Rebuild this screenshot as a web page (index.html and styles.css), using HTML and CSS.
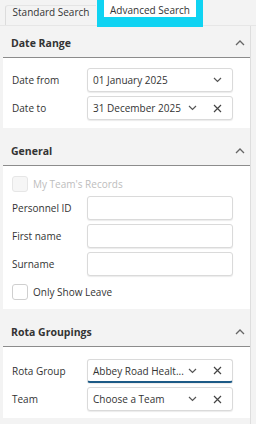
FILE: index.html
```html
<!DOCTYPE html>
<html lang="en">
<head>
    <meta charset="UTF-8">
    <meta name="viewport" content="width=device-width, initial-scale=1.0">
    <title>Search</title>
    <link rel="stylesheet" href="styles.css">
</head>
<body>
    <div class="tabs">
        <div class="tab">Standard Search</div>
        <div class="tab-active"><span>Advanced Search</span></div>
    </div>

    <div class="panel">
        <div class="section">
            <div class="section-head">
                <h4>Date Range</h4>
                <svg class="chev-up" width="10" height="6" viewBox="0 0 10 6"><path d="M1 5 L5 1 L9 5" fill="none" stroke="#666" stroke-width="1.3"/></svg>
            </div>
            <div class="section-body">
                <div class="row">
                    <label>Date from</label>
                    <div class="field">
                        <span class="value">01 January 2025</span>
                        <span class="icons">
                            <svg width="9" height="6" viewBox="0 0 9 6"><path d="M1 1 L4.5 4.5 L8 1" fill="none" stroke="#555" stroke-width="1.2"/></svg>
                        </span>
                    </div>
                </div>
                <div class="row">
                    <label>Date to</label>
                    <div class="field">
                        <span class="value">31 December 2025</span>
                        <span class="icons">
                            <svg width="9" height="6" viewBox="0 0 9 6"><path d="M1 1 L4.5 4.5 L8 1" fill="none" stroke="#555" stroke-width="1.2"/></svg>
                            <svg width="9" height="9" viewBox="0 0 9 9"><path d="M1 1 L8 8 M8 1 L1 8" fill="none" stroke="#444" stroke-width="1.2"/></svg>
                        </span>
                    </div>
                </div>
            </div>
        </div>

        <div class="section">
            <div class="section-head">
                <h4>General</h4>
                <svg class="chev-up" width="10" height="6" viewBox="0 0 10 6"><path d="M1 5 L5 1 L9 5" fill="none" stroke="#666" stroke-width="1.3"/></svg>
            </div>
            <div class="section-body general">
                <div class="check disabled">
                    <span class="box"></span>
                    <span>My Team's Records</span>
                </div>
                <div class="row">
                    <label>Personnel ID</label>
                    <div class="field"></div>
                </div>
                <div class="row">
                    <label>First name</label>
                    <div class="field"></div>
                </div>
                <div class="row">
                    <label>Surname</label>
                    <div class="field"></div>
                </div>
                <div class="check">
                    <span class="box"></span>
                    <span>Only Show Leave</span>
                </div>
            </div>
        </div>

        <div class="section">
            <div class="section-head">
                <h4>Rota Groupings</h4>
                <svg class="chev-up" width="10" height="6" viewBox="0 0 10 6"><path d="M1 5 L5 1 L9 5" fill="none" stroke="#666" stroke-width="1.3"/></svg>
            </div>
            <div class="section-body rota">
                <div class="row">
                    <label>Rota Group</label>
                    <div class="field focused">
                        <span class="value">Abbey Road Healt...</span>
                        <span class="icons">
                            <svg width="9" height="6" viewBox="0 0 9 6"><path d="M1 1 L4.5 4.5 L8 1" fill="none" stroke="#555" stroke-width="1.2"/></svg>
                            <svg width="9" height="9" viewBox="0 0 9 9"><path d="M1 1 L8 8 M8 1 L1 8" fill="none" stroke="#444" stroke-width="1.2"/></svg>
                        </span>
                    </div>
                </div>
                <div class="row">
                    <label>Team</label>
                    <div class="field">
                        <span class="value">Choose a Team</span>
                        <span class="icons">
                            <svg width="9" height="6" viewBox="0 0 9 6"><path d="M1 1 L4.5 4.5 L8 1" fill="none" stroke="#555" stroke-width="1.2"/></svg>
                            <svg width="9" height="9" viewBox="0 0 9 9"><path d="M1 1 L8 8 M8 1 L1 8" fill="none" stroke="#444" stroke-width="1.2"/></svg>
                        </span>
                    </div>
                </div>
            </div>
        </div>
    </div>
</body>
</html>
```

FILE: styles.css
```css
* {
    box-sizing: border-box;
    margin: 0;
    padding: 0;
}
body {
    background-color: #f3f3f3;
    font-family: 'Open Sans', sans-serif;
    font-size: 10px;
    color: #333;
    width: 256px;
    height: 424px;
    overflow: hidden;
}

/* tabs */
.tabs {
    display: flex;
    align-items: flex-start;
    height: 26px;
    padding-left: 5px;
    border-bottom: 1px solid #e6e6e6;
}
.tab {
    margin-top: 5px;
    height: 20px;
    width: 91px;
    line-height: 13px;
    text-align: center;
    border-left: 1px solid #dcdcdc;
    border-top: 1px solid #e4e4e4;
    border-radius: 3px 0 0 0;
    color: #333;
}
.tab-active {
    margin-left: 1px;
    width: 106px;
    height: 27px;
    background-color: #0fd3f2;
    padding: 0 7px 10px 7px;
}
.tab-active span {
    display: block;
    height: 17px;
    background-color: #fff;
    text-align: center;
    line-height: 20px;
}

/* panel */
.panel {
    margin-left: 3px;
    width: 248px;
    border-right: 1px solid #dedede;
    padding-top: 3px;
    height: 398px;
}
.section + .section {
    margin-top: 9px;
}
.section-head {
    display: flex;
    align-items: center;
    justify-content: space-between;
    height: 29px;
    padding: 0 5px 0 8px;
    border-bottom: 1px solid #8c8c8c;
}
.section-head h4 {
    font-size: 10.5px;
    font-weight: bold;
    color: #333;
}
.section-body {
    background-color: #fff;
    padding: 10px 17px 8px 9px;
    display: flex;
    flex-direction: column;
    gap: 4px;
}
.section-body.general {
    padding-bottom: 9px;
}
.section-body.rota {
    padding-top: 12px;
    padding-bottom: 7px;
}

.row {
    display: flex;
    align-items: center;
}
.row label {
    width: 75px;
    flex: none;
}
.field {
    flex: 1;
    height: 24px;
    border: 1px solid #dadada;
    border-radius: 3px;
    box-shadow: 0 1px 1px rgba(0, 0, 0, .08);
    display: flex;
    align-items: center;
    justify-content: space-between;
    padding: 0 10px 0 5px;
    background-color: #fff;
}
.field.focused {
    border-bottom: 2px solid #1c5a86;
}
.field .icons {
    display: flex;
    align-items: center;
    gap: 16px;
}

.check {
    display: flex;
    align-items: center;
    gap: 5px;
    height: 16px;
}
.check .box {
    width: 16px;
    height: 16px;
    border: 1px solid #cfcfcf;
    border-radius: 3px;
    background-color: #fff;
}
.check.disabled {
    color: #bdbdbd;
}
.check.disabled .box {
    border-color: #e6e6e6;
    background-color: #f6f6f6;
}
.section-body .row + .check {
    margin-top: 4px;
}
```
